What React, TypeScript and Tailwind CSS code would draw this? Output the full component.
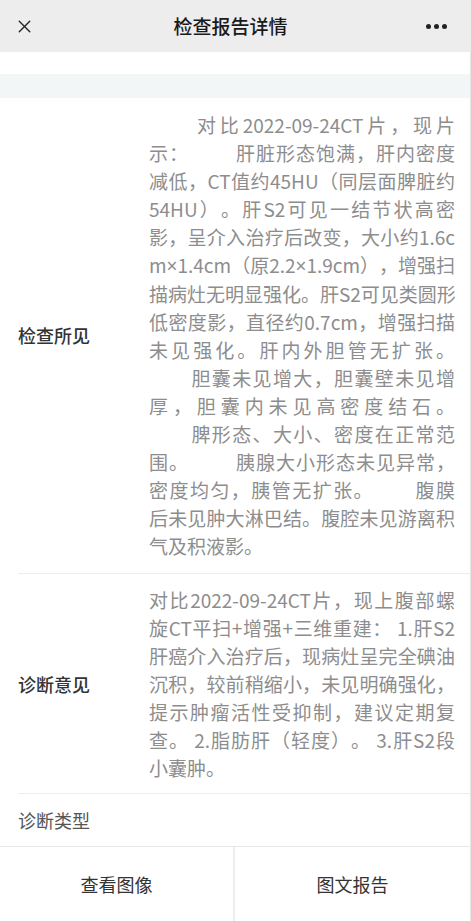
import { X } from "lucide-react";
import type { ReactNode } from "react";

const Gap = ({ w }: { w: string }) => <span className={`inline-block ${w}`} />;
const Times = () => <span className="font-['Noto_Sans',sans-serif]">×</span>;

const findingLines: ReactNode[] = [
  <>
    <Gap w="w-[44px]" />
    对比2022-09-24CT片，现片
  </>,
  <>
    示：
    <Gap w="w-[46px]" />
    肝脏形态饱满，肝内密度
  </>,
  "减低，CT值约45HU（同层面脾脏约",
  "54HU）。肝S2可见一结节状高密",
  "影，呈介入治疗后改变，大小约1.6c",
  <>
    m<Times />1.4cm（原2.2<Times />1.9cm），增强扫
  </>,
  "描病灶无明显强化。肝S2可见类圆形",
  "低密度影，直径约0.7cm，增强扫描",
  "未见强化。肝内外胆管无扩张。",
  <>
    <Gap w="w-[41px]" />
    胆囊未见增大，胆囊壁未见增
  </>,
  "厚，胆囊内未见高密度结石。",
  <>
    <Gap w="w-[41px]" />
    脾形态、大小、密度在正常范
  </>,
  <>
    围。
    <Gap w="w-[46px]" />
    胰腺大小形态未见异常，
  </>,
  <>
    密度均匀，胰管无扩张。
    <Gap w="w-[40px]" />
    腹膜
  </>,
  "后未见肿大淋巴结。腹腔未见游离积",
  "气及积液影。",
];

const opinion =
  "对比2022-09-24CT片，现上腹部螺旋CT平扫+增强+三维重建： 1.肝S2肝癌介入治疗后，现病灶呈完全碘油沉积，较前稍缩小，未见明确强化，提示肿瘤活性受抑制，建议定期复查。 2.脂肪肝（轻度）。 3.肝S2段小囊肿。";

const textCls =
  "w-[306px] text-justify text-[19px] leading-[28px] text-[#8d8d8d] break-all [text-spacing-trim:space-all]";

function Row({
  label,
  children,
  pad,
  last,
}: {
  label: string;
  children?: ReactNode;
  pad?: string;
  last?: boolean;
}) {
  return (
    <div className="flex items-center pl-[18px]">
      <div
        className={`flex flex-1 items-center ${last ? "h-[52px]" : `border-b border-[#ededed] ${pad}`}`}
      >
        <div
          className={`w-[131px] shrink-0 text-[18px] ${children ? "font-medium text-[#333]" : "text-[#555]"}`}
        >
          {label}
        </div>
        {children}
      </div>
    </div>
  );
}

export default function App() {
  return (
    <div className="flex h-[921px] w-[471px] flex-col bg-white font-['Noto_Sans_CJK_SC','Noto_Sans',sans-serif]">
      {/* Nav bar */}
      <header className="flex h-[52px] shrink-0 items-center justify-between bg-[#ededed] px-[14px]">
        <X size={21} strokeWidth={1.6} className="text-[#222]" />
        <h1 className="text-[19px] font-medium text-[#1a1a1a]">检查报告详情</h1>
        <div className="flex gap-[3px] pr-[10px]">
          <span className="h-[5px] w-[5px] rounded-full bg-[#222]" />
          <span className="h-[5px] w-[5px] rounded-full bg-[#222]" />
          <span className="h-[5px] w-[5px] rounded-full bg-[#222]" />
        </div>
      </header>

      <div className="flex flex-1 flex-col border-r border-[#e6e6e6]">
        <div className="h-[22px] shrink-0" />
        <div className="h-[24px] shrink-0 bg-[#f2f6f6]" />

        <Row label="检查所见" pad="py-[13px]">
          <div className={textCls}>
            {findingLines.map((line, i) => (
              <div
                key={i}
                className={`whitespace-nowrap ${i < findingLines.length - 1 ? "[text-align-last:justify]" : ""}`}
              >
                {line}
              </div>
            ))}
          </div>
        </Row>
        <Row label="诊断意见" pad="pt-[12px] pb-[11px]">
          <p className={textCls}>{opinion}</p>
        </Row>
        <Row label="诊断类型" last />
      </div>

      {/* Bottom actions */}
      <div className="grid h-[76px] shrink-0 grid-cols-2 border-y border-r border-[#e6e6e6] text-[18px] text-[#333]">
        <button className="border-r-2 border-[#ededed]">查看图像</button>
        <button>图文报告</button>
      </div>
    </div>
  );
}
